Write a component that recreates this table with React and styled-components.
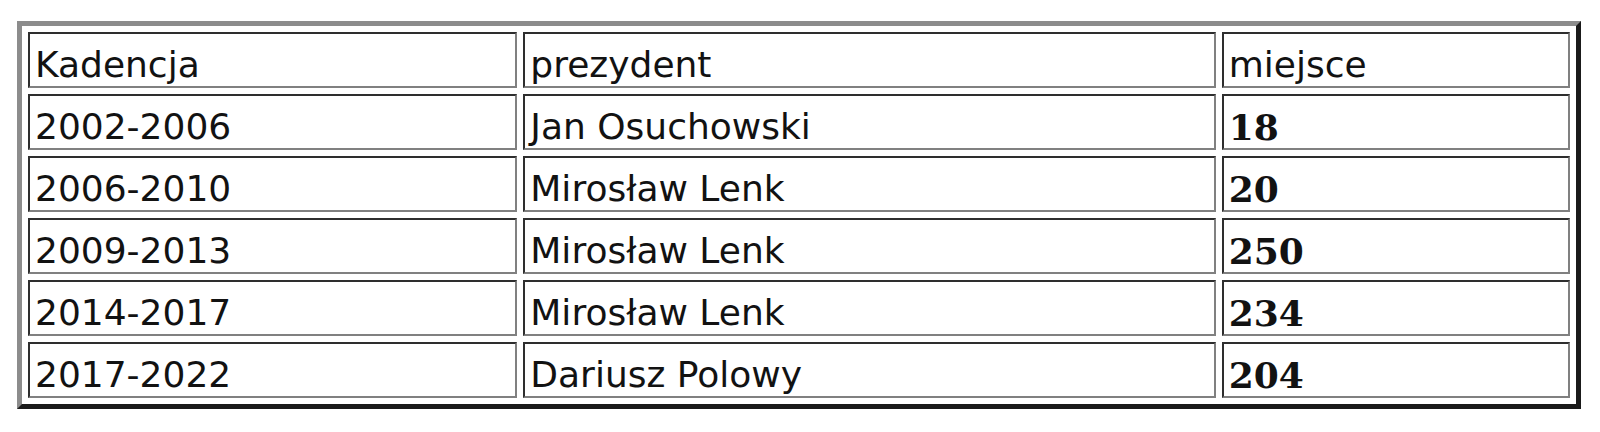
import React from "react";
import styled, { createGlobalStyle } from "styled-components";

const Global = createGlobalStyle`
  html, body { margin: 0; padding: 0; background: #ffffff; }
  body { font-family: "DejaVu Sans", Verdana, sans-serif; color: #111; }
`;

const Page = styled.div`
  padding: 21px 0 0 17px;
`;

const Table = styled.table`
  border-collapse: separate;
  border-spacing: 6px;
  border-style: solid;
  border-width: 5px;
  border-color: #8c8c8c #1a1a1a #1a1a1a #8c8c8c;
  width: 1564px;
  box-sizing: border-box;
  table-layout: fixed;
`;

const Cell = styled.td`
  box-sizing: border-box;
  height: 56px;
  padding: 10px 3px 0 5px;
  border-style: solid;
  border-width: 2px;
  border-color: #2e2e2e #808080 #808080 #2e2e2e;
  font-family: ${(p) => (p.$bold ? '"DejaVu Serif", "Liberation Serif", serif' : '"DejaVu Sans", Verdana, sans-serif')};
  font-weight: ${(p) => (p.$bold ? 700 : 400)};
  font-size: 36px;
  line-height: 42px;
  vertical-align: top;
  color: #121212;
  white-space: nowrap;
  overflow: hidden;
`;

const rows = [
  ["2002-2006", "Jan Osuchowski", "18"],
  ["2006-2010", "Mirosław Lenk", "20"],
  ["2009-2013", "Mirosław Lenk", "250"],
  ["2014-2017", "Mirosław Lenk", "234"],
  ["2017-2022", "Dariusz Polowy", "204"],
];

export default function App() {
  return (
    <>
      <Global />
      <Page>
        <Table>
          <colgroup>
            <col style={{ width: "489px" }} />
            <col style={{ width: "692px" }} />
            <col style={{ width: "348px" }} />
          </colgroup>
          <tbody>
            <tr>
              <Cell>Kadencja</Cell>
              <Cell>prezydent</Cell>
              <Cell>miejsce</Cell>
            </tr>
            {rows.map((r) => (
              <tr key={r[0]}>
                <Cell>{r[0]}</Cell>
                <Cell>{r[1]}</Cell>
                <Cell $bold>{r[2]}</Cell>
              </tr>
            ))}
          </tbody>
        </Table>
      </Page>
    </>
  );
}
